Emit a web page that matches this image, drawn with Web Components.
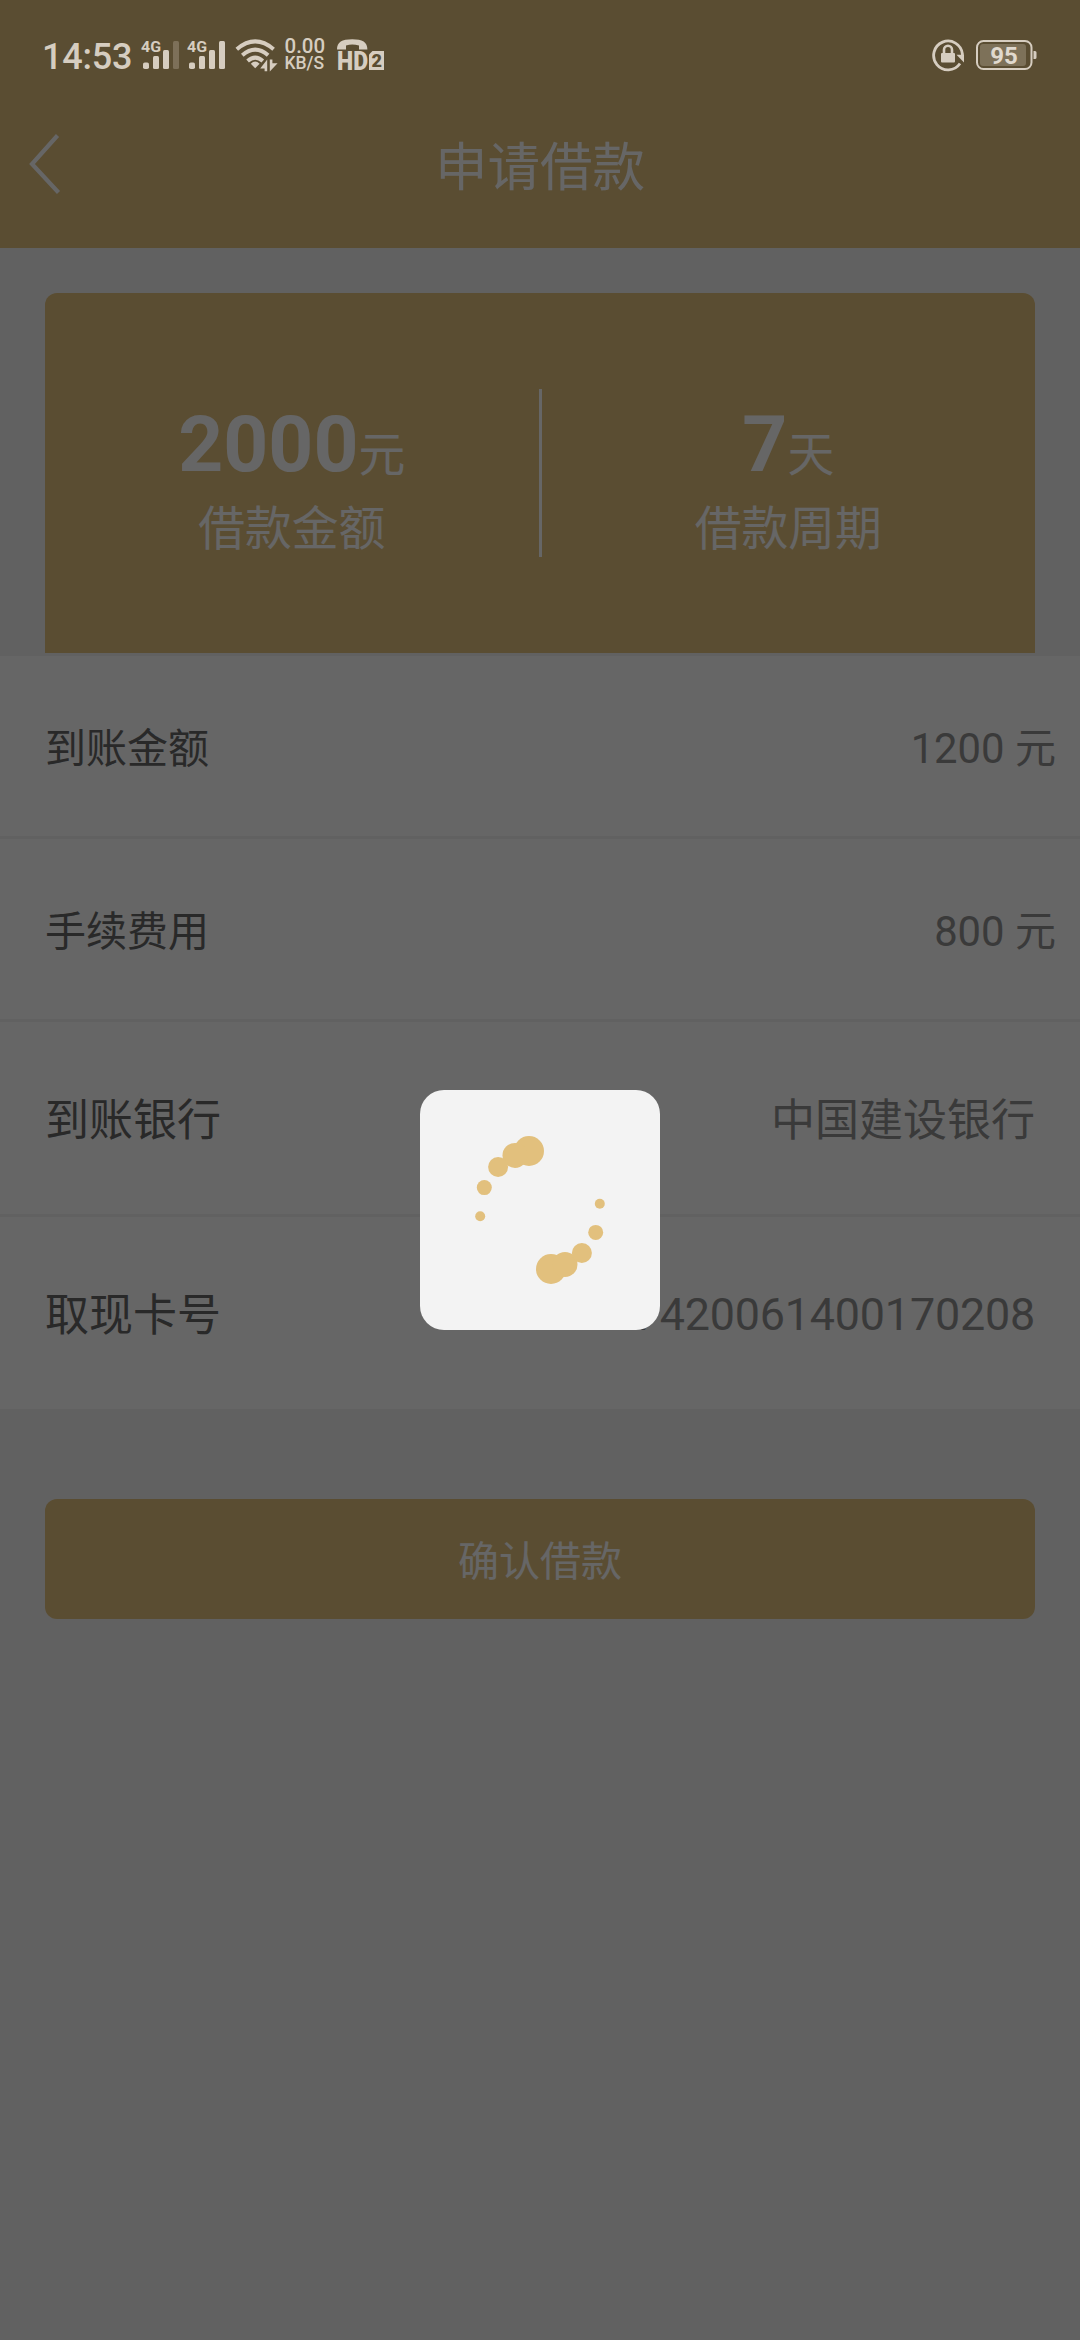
<!DOCTYPE html>
<html lang="zh-CN">
<head>
<meta charset="utf-8">
<title>申请借款</title>
<style>
html,body{margin:0;padding:0}
body{width:1080px;height:2340px;overflow:hidden;background:#f3f3f3;font-family:Roboto,"Noto Sans CJK SC",sans-serif}
</style>
</head>
<body>
<loan-app></loan-app>
<script>
const define=(name,html)=>{
  const t=document.createElement('template');
  t.innerHTML=html;
  customElements.define(name,class extends HTMLElement{
    constructor(){super();this.attachShadow({mode:'open'}).append(t.content.cloneNode(true));}
  });
};

define('signal-icon',`
<style>
:host{display:block;width:40px;height:32px;color:#d6cdc0}
svg{display:block;overflow:visible}
rect{fill:currentColor}
text{font:700 14px Roboto,sans-serif;fill:currentColor}
.last{opacity:var(--last-bar,1)}
</style>
<svg width="40" height="32" viewBox="0 0 40 32">
<text x="0" y="11.6" textLength="20" lengthAdjust="spacingAndGlyphs">4G</text>
<rect x="2" y="22.5" width="6" height="6.5" rx="1.8"/>
<rect x="12" y="16" width="6" height="13" rx="1.5"/>
<rect x="22" y="10" width="6" height="19" rx="1.5"/>
<rect class="last" x="32" y="1" width="6" height="28" rx="1.5"/>
</svg>`);

define('wifi-icon',`
<style>:host{display:block;width:44px;height:34px}svg{display:block}</style>
<svg width="44" height="34" viewBox="0 0 44 34" fill="none" stroke="#d6cdc0" stroke-width="4">
<path d="M1.8 10.2Q20.2 -5.4 38.6 10.2"/>
<path d="M7.3 16.2Q20.2 5 33.1 16.2"/>
<path d="M12.6 22Q20.2 15.4 27.8 22"/>
<path d="M15.8 24.8Q20.2 20.4 24.6 24.8L20.2 29.2Z" fill="#d6cdc0" stroke="none"/>
<path d="M32.2 20.6V32.2H29.6V29.5H25.2ZM34.8 20.6V32.6L42.6 24.2H37.4V20.6Z" fill="#d6cdc0" stroke="none"/>
</svg>`);

define('hd-icon',`
<style>:host{display:block;width:50px;height:34px;flex:none}svg{display:block;overflow:visible}text{font-family:Roboto,sans-serif;font-weight:900}</style>
<svg width="50" height="34" viewBox="0 0 50 34" fill="#d6cdc0">
<path d="M1 10.5C1 3 6 .2 16.200 .2S31.400 3 31.400 10.500H23V6.500Q16 4.600 10 6.500V10.500Z"/>
<text x="1" y="31" font-size="26" textLength="31" lengthAdjust="spacingAndGlyphs">HD</text>
<path d="M36.500 12H48V31H33V15.500Z"/>
<text x="35.400" y="28" font-size="18" fill="#5a4d32" textLength="10.500" lengthAdjust="spacingAndGlyphs">2</text>
</svg>`);

define('rotation-lock-icon',`
<style>:host{display:block;width:34px;height:34px}svg{display:block}</style>
<svg width="34" height="34" viewBox="0 0 34 34" fill="none" stroke="#d6cdc0" stroke-width="2.800">
<path d="M30.400 17V15A14.400 14.400 0 1 0 28 24.500"/>
<path d="M24.500 15.800H32V23.500Z" fill="#d6cdc0" stroke="none"/>
<rect x="9" y="14" width="14" height="9.600" rx="1" fill="#d6cdc0" stroke="none"/>
<path d="M12 14.500V10.800A4 4 0 0 1 20 10.800V14.500" stroke-width="2.600"/>
</svg>`);

define('battery-icon',`
<style>:host{display:block;width:62px;height:32px}svg{display:block;overflow:visible}text{font:700 24px Roboto,sans-serif}</style>
<svg width="62" height="32" viewBox="0 0 62 32">
<rect x="1" y="1" width="54.500" height="28" rx="6.500" fill="none" stroke="#d6cdc0" stroke-width="2"/>
<rect x="4" y="4" width="46" height="22" rx="3" fill="#7d7159"/>
<path d="M57.500 11h1.500a1.500 1.500 0 0 1 1.500 1.500v5a1.500 1.500 0 0 1-1.500 1.500H57.500z" fill="#d6cdc0"/>
<text x="14.300" y="23.800" fill="#e0d9ce">95</text>
</svg>`);

define('status-bar',`
<style>
:host{display:flex;align-items:flex-start;box-sizing:border-box;height:80px;padding:39px 43px 0 42px;position:relative;z-index:3;color:#d6cdc0}
.time{font-size:36px;font-weight:500;line-height:36px;width:98.500px;letter-spacing:-.2px}
signal-icon{margin:1px 6px 0 0}
.dim{--last-bar:.28}
wifi-icon{margin-left:2px}
.speed{width:51px;flex:none;margin-left:6px;font-weight:500}
.speed span{display:block;height:15px;line-height:15px;white-space:nowrap}
.speed .n{font-size:20.500px}
.speed .u{font-size:17.500px;margin-top:2px}
rotation-lock-icon{margin-left:auto;margin-right:10px}
battery-icon{margin-top:1px;margin-right:-.5px}
</style>
<span class="time">14:53</span><signal-icon class="dim"></signal-icon><signal-icon></signal-icon><wifi-icon></wifi-icon>
<div class="speed"><span class="n">0.00</span><span class="u">KB/S</span></div><hd-icon></hd-icon>
<rotation-lock-icon></rotation-lock-icon><battery-icon></battery-icon>`);

define('nav-header',`
<style>
:host{display:grid;grid-template-columns:90px 1fr 90px;align-items:center;height:168px;color:#fff}
svg{display:block}
h1{margin:0;padding-top:8px;text-align:center;font-size:52.500px;line-height:76px;font-weight:400}
</style>
<svg width="90" height="168" viewBox="0 0 90 168" fill="none" stroke="#fff" stroke-width="4.200"><path d="M57.500 55.500L32 84L58.500 112.500"/></svg>
<h1><slot></slot></h1>`);

define('loan-figure',`
<style>
:host{display:flex;flex-direction:column;align-items:center;flex:1;color:#fff}
.top{font-size:46.800px;line-height:92px;height:97px;white-space:nowrap}
b{font-size:78.500px;font-weight:700;line-height:92px}
.label{font-size:46.800px;line-height:68px}
</style>
<div class="top"><b><slot name="value"></slot></b><slot name="unit"></slot></div>
<div class="label"><slot></slot></div>`);

define('loan-card',`
<style>
:host{display:flex;box-sizing:border-box;height:360px;margin:45px 45px 0;padding-top:96px;background:#e2c07d;border-radius:12px 12px 0 0}
.line{width:3px;height:168px;background:#fff}
loan-figure{padding-top:9px}
</style>
<loan-figure><span slot="value">2000</span><span slot="unit">元</span>借款金额</loan-figure>
<div class="line"></div>
<loan-figure><span slot="value">7</span><span slot="unit">天</span>借款周期</loan-figure>`);

define('info-row',`
<style>
:host{display:flex;box-sizing:border-box;align-items:center;justify-content:space-between;height:183px;border-top:3px solid #f3f3f3;background:#fff;padding:0 24px 3px 45px;font-size:41px;color:#676767}
:host([large]){height:195px;padding-right:45px;padding-bottom:2px;font-size:44px}
.v{color:#929292;font-size:1.02em;white-space:nowrap}
</style>
<span><slot></slot></span><span class="v"><slot name="value"></slot></span>`);

define('primary-button',`
<style>
:host{display:block;margin:90px 45px 0}
button{display:block;width:100%;height:120px;padding:0 0 3px;border:0;border-radius:12px;background:#e2c07d;color:#fff;font-family:inherit;font-size:41px}
</style>
<button><slot></slot></button>`);

define('loading-overlay',`
<style>
:host{position:absolute;inset:0;z-index:2;box-sizing:border-box;padding-top:80px;background:rgba(0,0,0,.6);display:flex;align-items:center;justify-content:center}
.box{width:240px;height:240px;border-radius:24px;background:#f3f3f3}
svg{display:block}
</style>
<div class="box"><svg width="240" height="240" viewBox="0 0 240 240" fill="#e2c07d">
<circle cx="109" cy="61" r="15"/><circle cx="95" cy="65.400" r="12.500"/><circle cx="78.100" cy="77" r="10"/><circle cx="64.300" cy="97.600" r="7.500"/><circle cx="60.200" cy="126.200" r="5"/>
<circle cx="131" cy="179" r="15"/><circle cx="145" cy="174.400" r="12.500"/><circle cx="161.900" cy="163" r="10"/><circle cx="175.700" cy="142.400" r="7.500"/><circle cx="179.800" cy="113.800" r="5"/>
</svg></div>`);

define('loan-app',`
<style>
:host{display:block;position:relative;width:1080px;height:2340px;background:#f3f3f3;overflow:hidden}
header{background:#e2c07d;height:248px}
.cjk{font-size:41px}.cjk6{font-size:44px}
.card-no{display:block;padding-top:5px;letter-spacing:-.2px}
</style>
<header><status-bar></status-bar><nav-header>申请借款</nav-header></header>
<loan-card></loan-card>
<info-row>到账金额<span slot="value">1200 <span class="cjk">元</span></span></info-row>
<info-row>手续费用<span slot="value">800 <span class="cjk">元</span></span></info-row>
<info-row large>到账银行<span slot="value" class="cjk6">中国建设银行</span></info-row>
<info-row large>取现卡号<span slot="value" class="card-no">4367420061400170208</span></info-row>
<primary-button>确认借款</primary-button>
<loading-overlay></loading-overlay>`);
</script>
</body>
</html>
